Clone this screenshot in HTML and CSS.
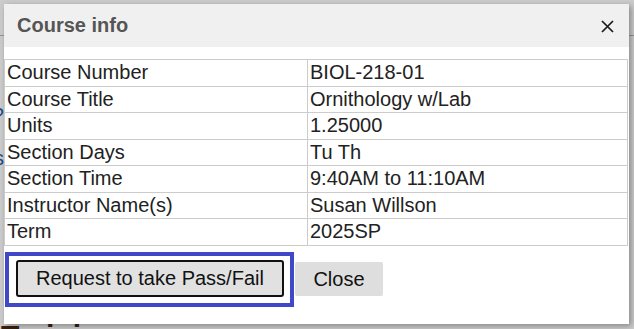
FILE: index.html
```html
<!DOCTYPE html>
<html lang="en">
<head>
    <meta charset="UTF-8">
    <title>Course info</title>
    <link rel="stylesheet" href="styles.css">
</head>
<body>
    <div class="page">
        <div class="page-top"></div>
        <div class="page-side">
            <span class="link">Help?</span>
            <span class="link">Units</span>
        </div>
        <h2 class="page-heading">Training</h2>
    </div>
    <div class="overlay"></div>

    <div class="dialog">
        <div class="dialog-header">
            <span class="dialog-title">Course info</span>
            <span class="dialog-close">
                <svg width="13" height="13" viewBox="0 0 13 13"><path d="M1 1L12 12M12 1L1 12" stroke="#1a1a1a" stroke-width="1.7" fill="none"/></svg>
            </span>
        </div>
        <div class="dialog-body">
            <table class="info">
                <tr><td class="label">Course Number</td><td>BIOL-218-01</td></tr>
                <tr><td class="label">Course Title</td><td>Ornithology w/Lab</td></tr>
                <tr><td class="label">Units</td><td>1.25000</td></tr>
                <tr><td class="label">Section Days</td><td>Tu Th</td></tr>
                <tr><td class="label">Section Time</td><td>9:40AM to 11:10AM</td></tr>
                <tr><td class="label">Instructor Name(s)</td><td>Susan Willson</td></tr>
                <tr><td class="label">Term</td><td>2025SP</td></tr>
            </table>
            <div class="actions">
                <span class="focus-ring"><button class="btn btn-primary">Request to take Pass/Fail</button></span>
                <button class="btn btn-close">Close</button>
            </div>
        </div>
    </div>
</body>
</html>
```

FILE: styles.css
```css
* {
    margin: 0;
    padding: 0;
    box-sizing: border-box;
}

body {
    font-family: 'Liberation Sans', Arial, sans-serif;
    background: #fff;
    width: 634px;
    height: 329px;
    overflow: hidden;
    position: relative;
}

.page {
    height: 329px;
    display: flex;
    flex-direction: column;
}

.page-top {
    height: 36px;
    border-bottom: 1px solid #bbb;
}

.page-side {
    width: 4px;
    overflow: hidden;
    display: flex;
    flex-direction: column;
    gap: 20px;
    margin-top: 68px;
}

.link {
    display: flex;
    justify-content: flex-end;
    white-space: nowrap;
    color: #1f5fb0;
    font-size: 20px;
}

.page-heading {
    margin-top: auto;
    margin-bottom: -22px;
    margin-left: 1px;
    font-size: 30px;
    line-height: 30px;
    color: #4a2a12;
}

.overlay {
    position: absolute;
    inset: 0;
    background: rgba(0, 0, 0, 0.2);
}

.dialog {
    position: absolute;
    left: 4px;
    top: 4px;
    width: 625px;
    height: 320px;
    background: #fff;
    box-shadow: 2px 2px 6px rgba(0, 0, 0, 0.35);
    color: #222;
}

.dialog-header {
    height: 43px;
    background: #f0f0f0;
    display: flex;
    align-items: center;
    justify-content: space-between;
    padding: 0 15px 0 13px;
}

.dialog-title {
    font-size: 20px;
    font-weight: bold;
    color: #555;
}

.dialog-close {
    display: flex;
    margin-top: 1px;
}

.dialog-body {
    padding-top: 12px;
}

.info {
    width: 624px;
    border-collapse: collapse;
    font-size: 20px;
}

.info td {
    border: 1px solid #ccc;
    padding: 1px 2px;
    line-height: 23.5px;
}

.info td.label {
    width: 303px;
}

.actions {
    display: flex;
    align-items: center;
    gap: 1px;
    padding: 6px 0 0 1px;
}

.focus-ring {
    display: flex;
    border: 4px solid #4047c8;
    padding: 4px 6px 6px 7px;
}

.btn {
    font-family: inherit;
    font-size: 20px;
    line-height: 23px;
    color: #111;
    cursor: pointer;
}

.btn-primary {
    background: #e1e1e1;
    border: 2px solid #111;
    border-radius: 3px;
    padding: 5px 18px;
}

.btn-close {
    background: #dedede;
    border: none;
    border-radius: 2px;
    padding: 5.5px 18.5px;
}
```
